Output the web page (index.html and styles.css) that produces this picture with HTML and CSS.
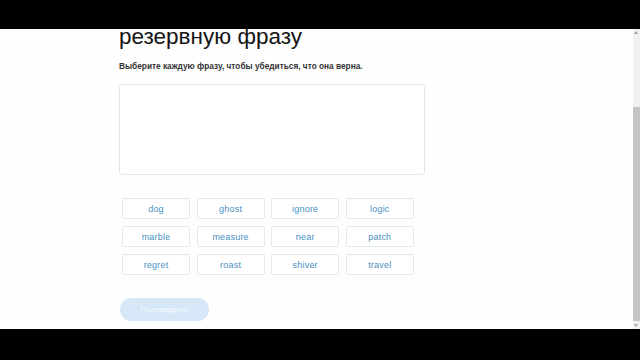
FILE: index.html
```html
<!DOCTYPE html>
<html lang="ru">
<head>
<meta charset="utf-8">
<link rel="stylesheet" href="styles.css">
</head>
<body>
<div class="screen">
  <div class="bar-top"></div>
  <div class="viewport">
    <main class="content">
      <h1 class="title">резервную фразу</h1>
      <p class="subtitle">Выберите каждую фразу, чтобы убедиться, что она верна.</p>
      <div class="dropzone"></div>
      <div class="words">
        <button class="word">dog</button>
        <button class="word">ghost</button>
        <button class="word">ignore</button>
        <button class="word">logic</button>
        <button class="word">marble</button>
        <button class="word">measure</button>
        <button class="word">near</button>
        <button class="word">patch</button>
        <button class="word">regret</button>
        <button class="word">roast</button>
        <button class="word">shiver</button>
        <button class="word">travel</button>
      </div>
      <button class="confirm">Подтвердить</button>
    </main>
    <div class="scrollbar">
      <div class="arrow arrow-up"></div>
      <div class="track"><div class="thumb"></div></div>
      <div class="arrow arrow-down"></div>
    </div>
  </div>
  <div class="bar-bottom"></div>
</div>
</body>
</html>
```
FILE: styles.css
```css
html, body {
  margin: 0;
  padding: 0;
  background: #000;
}
.screen {
  width: 640px;
  height: 360px;
  display: flex;
  flex-direction: column;
  overflow: hidden;
}
.bar-top {
  height: 29px;
  background: #000;
}
.bar-bottom {
  height: 31px;
  background: #000;
}
.viewport {
  height: 300px;
  display: flex;
  background: #fefefe;
  overflow: hidden;
}
.content {
  flex: 1;
  padding-left: 119px;
  font-family: "Liberation Sans", Arial, sans-serif;
}
.title {
  margin: -3px 0 0;
  font-size: 22.5px;
  font-weight: 400;
  color: #141414;
  line-height: 22px;
}
.subtitle {
  margin: 13px 0 0;
  font-size: 8.3px;
  font-weight: 700;
  color: #333;
  line-height: 11px;
}
.dropzone {
  margin-top: 12px;
  width: 304px;
  height: 89px;
  border: 1px solid #e6e6e6;
  border-radius: 3px;
  background: #fff;
}
.words {
  margin: 23px 0 0 3px;
  width: 292px;
  display: grid;
  grid-template-columns: repeat(4, 68px);
  column-gap: 6.6px;
  row-gap: 7px;
}
.word {
  height: 21px;
  padding: 0;
  border: 1px solid #e6e9ec;
  border-radius: 2px;
  background: #fff;
  color: #4a90c2;
  font-family: "Liberation Sans", Arial, sans-serif;
  font-size: 9px;
  letter-spacing: 0.2px;
}
.confirm {
  display: block;
  margin-top: 23px;
  margin-left: 1px;
  width: 89px;
  height: 23px;
  border: none;
  border-radius: 12px;
  background: #d6e8f7;
  color: #f4f9fd;
  font-family: "Liberation Sans", Arial, sans-serif;
  font-size: 8px;
}
.scrollbar {
  width: 7px;
  background: #f1f1f1;
  display: flex;
  flex-direction: column;
}
.arrow {
  height: 7px;
  position: relative;
}
.arrow::after {
  content: "";
  position: absolute;
  left: 1px;
  width: 0;
  height: 0;
  border-left: 2.5px solid transparent;
  border-right: 2.5px solid transparent;
}
.arrow-up::after {
  top: 2px;
  border-bottom: 3px solid #a3a3a3;
}
.arrow-down::after {
  top: 2px;
  border-top: 3px solid #a3a3a3;
}
.track {
  flex: 1;
  display: flex;
  flex-direction: column;
  justify-content: flex-end;
}
.thumb {
  height: 214px;
  margin-bottom: 1px;
  background: #c4c4c4;
}
```
